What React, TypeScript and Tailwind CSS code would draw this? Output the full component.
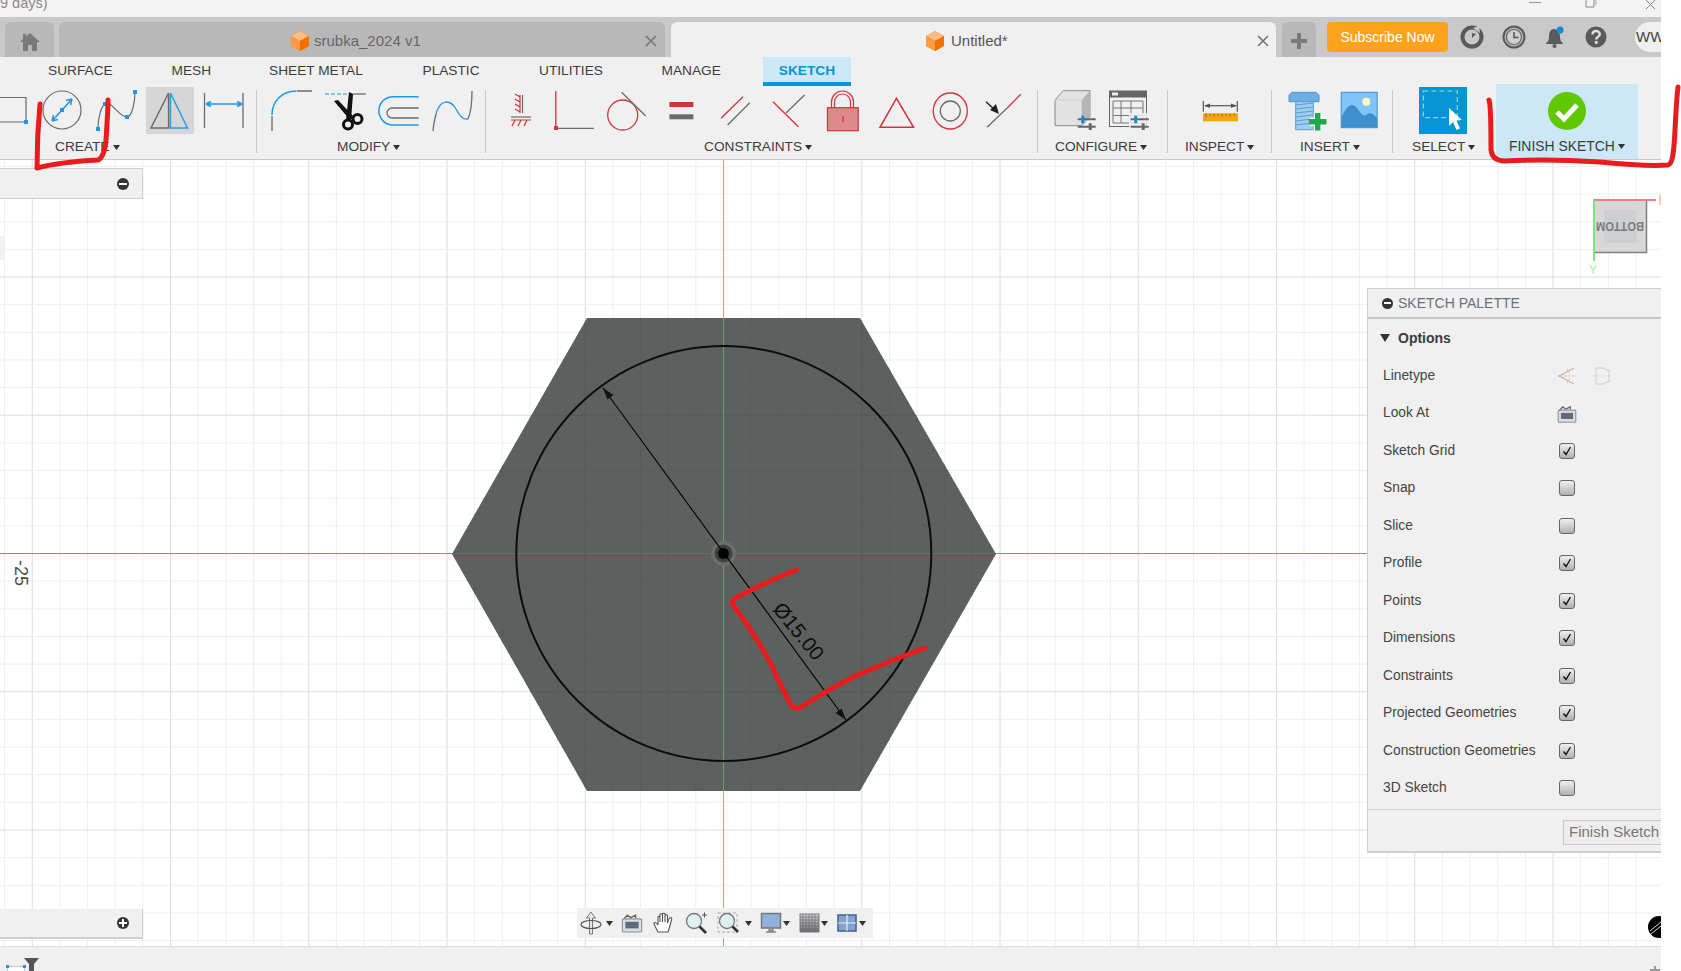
import React from "react";

const G = "#6b6b6b";
const B = "#2196e8";
const R = "#d0343a";

const Ic = ({ w = 54, children }: { w?: number; children: React.ReactNode }) => (
  <svg width={w} height={48} viewBox={`0 0 ${w} 48`} className="block shrink-0" fill="none" overflow="visible">
    {children}
  </svg>
);

const Caret = ({ c = "#333" }: { c?: string }) => (
  <svg width={7} height={5} viewBox="0 0 7 5" className="block shrink-0">
    <path d="M0 0H7L3.5 5Z" fill={c} />
  </svg>
);

const Pt = ({ x, y, s = 4 }: { x: number; y: number; s?: number }) => (
  <rect x={x - s / 2} y={y - s / 2} width={s} height={s} fill={B} />
);

const Sliders = ({ x }: { x: number }) => (
  <g>
    <path d={`M${x} 32.3H${x + 18}M${x} 39.7H${x + 18}`} stroke="#666" strokeWidth={2} />
    <rect x={x + 3.5} y={28.7} width={3} height={7.6} fill="#1689d8" />
    <rect x={x + 11} y={36.3} width={3} height={6.7} fill="#666" />
  </g>
);

function Group({
  w,
  pl,
  labelPl,
  label,
  children,
}: {
  w: string;
  pl: string;
  labelPl: string;
  label: string;
  children: React.ReactNode;
}) {
  return (
    <div className={`${w} shrink-0 flex flex-col pt-px overflow-hidden`}>
      <div className={`flex ${pl}`}>{children}</div>
      <div className={`flex items-center gap-[3px] h-4 leading-4 mt-1 text-[13.7px] text-[#3c3c3c] ${labelPl}`}>
        <span className="whitespace-nowrap">{label}</span>
        <Caret />
      </div>
    </div>
  );
}

const Divider = () => <div className="w-px h-[63px] mt-1 bg-[#c9c9c9] shrink-0" />;

const Cube = () => (
  <svg width={18} height={20} viewBox="0 0 18 20" className="block shrink-0">
    <path d="M9 0L18 5V15L9 20L0 15V5Z" fill="#f97f13" />
    <path d="M9 0L18 5L9 10L0 5Z" fill="#fbbd83" />
    <path d="M0 5L9 10V20L0 15Z" fill="#fd9c3f" />
    <path d="M18 5L9 10V20L18 15Z" fill="#f26f00" />
  </svg>
);

const CloseX = () => (
  <svg width={12} height={12} viewBox="0 0 12 12" className="block shrink-0">
    <path d="M1 1L11 11M11 1L1 11" stroke="#777" strokeWidth={1.7} />
  </svg>
);

const Check = ({ on }: { on: boolean }) => (
  <div className="w-4 h-4 rounded-[3px] border-[1.5px] border-[#666] bg-linear-to-b from-[#f0f0f0] to-[#b0b0b0] flex items-center justify-center -mt-px">
    {on && (
      <svg width={12} height={12} viewBox="0 0 12 12" className="block">
        <path d="M2.5 6.5L5 9.5L9.5 2" stroke="#111" strokeWidth={1.4} fill="none" />
      </svg>
    )}
  </div>
);

const LookIcon = ({ s = 20 }: { s?: number }) => (
  <svg width={s} height={s} viewBox="0 0 20 20" className="block shrink-0">
    <path d="M3 7L6 3.5L9 5.5L13 3.5V6" stroke="#666" strokeWidth={1.2} fill="none" />
    <rect x={2} y={6.5} width={16} height={11} rx={1} fill="#d8dde2" stroke="#8c9298" />
    <rect x={4.5} y={9} width={11} height={5.5} fill="#5d6b78" />
  </svg>
);

const rows: [string, boolean][] = [
  ["Sketch Grid", true],
  ["Snap", false],
  ["Slice", false],
  ["Profile", true],
  ["Points", true],
  ["Dimensions", true],
  ["Constraints", true],
  ["Projected Geometries", true],
  ["Construction Geometries", true],
  ["3D Sketch", false],
];

const X0 = 723.5;
const Y0 = 553.5;
const STEP = 27.65;
const idx = (a: number, b: number) => {
  const r: number[] = [];
  for (let i = a; i <= b; i++) r.push(i);
  return r;
};
const HEX = "452,554 587,318 860,318 996,554 860,791 587,791";

function GridLines({ minor, major }: { minor: string; major: string }) {
  return (
    <g>
      {idx(-27, 35).map((i) => {
        const x = X0 + i * STEP;
        return <line key={`v${i}`} x1={x} x2={x} y1={160} y2={946} stroke={i % 5 === 0 ? major : minor} strokeWidth={1} />;
      })}
      {idx(-15, 15).map((i) => {
        const y = Y0 + i * STEP;
        return <line key={`h${i}`} y1={y} y2={y} x1={0} x2={1661} stroke={i % 5 === 0 ? major : minor} strokeWidth={1} />;
      })}
    </g>
  );
}

function CanvasDrawing() {
  return (
    <svg width={1661} height={786} viewBox="0 160 1661 786" className="absolute left-0 top-0 block">
      <defs>
        <clipPath id="hexc">
          <polygon points={HEX} />
        </clipPath>
      </defs>
      <rect x={0} y={160} width={1661} height={786} fill="#fff" />
      <GridLines minor="#efefef" major="#dcdcdc" />
      <rect x={0} y={236} width={4} height={24} fill="#f2f2f2" />
      <line x1={0} x2={1367} y1={Y0} y2={Y0} stroke="#d66a6a" strokeWidth={1} />
      <line x1={X0} x2={X0} y1={160} y2={946} stroke="#74c974" strokeWidth={1} />
      <polygon points={HEX} fill="#5c615f" />
      <g clipPath="url(#hexc)">
        <GridLines minor="#595e5c" major="#555a58" />
        <line x1={0} x2={1367} y1={Y0} y2={Y0} stroke="#a84f50" strokeWidth={1} />
        <line x1={X0} x2={X0} y1={160} y2={946} stroke="#5fa864" strokeWidth={1} />
      </g>
      <circle cx={X0 + 0.3} cy={Y0} r={207.5} fill="none" stroke="#0c0c0c" strokeWidth={2} />
      <circle cx={X0} cy={Y0} r={12.5} fill="#6a6e6c" />
      <circle cx={X0} cy={Y0} r={9} fill="#3f4241" />
      <circle cx={X0} cy={Y0} r={5.5} fill="#050505" />
      <line x1={603} y1={388} x2={846} y2={720} stroke="#000" strokeWidth={1.1} />
      <path d="M603 388L613.5 395L607.5 399.5Z" fill="#111" />
      <path d="M846 720L835.5 713L841.5 708.5Z" fill="#111" />
      <text
        x={799}
        y={631}
        textAnchor="middle"
        dominantBaseline="central"
        fontSize={20.5}
        fill="#0c0c0c"
        transform="rotate(51 799 631)"
        fontFamily="Liberation Sans"
      >
        Ø15.00
      </text>
      <text
        x={21}
        y={573}
        textAnchor="middle"
        dominantBaseline="central"
        fontSize={18}
        fill="#4a4a4a"
        transform="rotate(90 21 573)"
        fontFamily="Liberation Sans"
      >
        -25
      </text>

      <rect x={1594} y={200} width={52.5} height={52.5} fill="#d8d8d8" stroke="#808080" strokeWidth={1.5} />
      <rect x={1604} y={210} width={32.5} height={33} fill="#cdcfd1" />
      <text
        x={1620}
        y={226}
        textAnchor="middle"
        dominantBaseline="central"
        fontSize={13}
        fontWeight={700}
        fill="#7c7c7c"
        textLength={48}
        lengthAdjust="spacingAndGlyphs"
        transform="rotate(180 1620 226)"
        fontFamily="Liberation Sans"
      >
        BOTTOM
      </text>
      <line x1={1594} x2={1656} y1={200} y2={200} stroke="#f07d82" strokeWidth={2} />
      <line x1={1594} x2={1594} y1={200} y2={261} stroke="#78e878" strokeWidth={2} />
      <text x={1593} y={269} textAnchor="middle" dominantBaseline="central" fontSize={13} fill="#a8eea8" fontFamily="Liberation Sans">
        Y
      </text>
      <path d="M1660 195V205" stroke="#f7b5b5" strokeWidth={1.5} />
    </svg>
  );
}

export default function App() {
  return (
    <div className="relative w-[1681px] h-[971px] bg-white overflow-hidden flex font-['Liberation_Sans',sans-serif]">
      <div className="w-[1661px] h-full flex flex-col overflow-hidden shrink-0">
        {/* window strip */}
        <div className="h-[17px] bg-[#f3f3f3] overflow-hidden relative shrink-0">
          <div className="-mt-[5px] text-[14.5px] leading-4 text-[#8a8a8a]">9 days)</div>
          <div className="absolute left-[1529px] top-[2px] w-3 h-px bg-[#999]" />
          <svg width={14} height={10} viewBox="0 0 14 10" className="absolute left-[1585px] top-0 block">
            <path d="M1 0V7H9V0M4 0V-1" stroke="#888" fill="none" />
            <path d="M11 0V5" stroke="#aaa" fill="none" />
          </svg>
          <svg width={12} height={10} viewBox="0 0 12 10" className="absolute left-[1645px] top-0 block">
            <path d="M1 0L10 9M10 0L1 9" stroke="#888" />
          </svg>
        </div>

        {/* document tab bar */}
        <div className="h-10 bg-[#c9c9c9] pt-[5px] flex items-stretch shrink-0 overflow-hidden">
          <div className="ml-[5px] w-[49px] shrink-0 rounded-t-md bg-[#b8b8b8] flex items-center justify-center pt-[5px]">
            <svg width={20} height={18} viewBox="0 0 20 18" className="block">
              <path d="M10 0L20 9H17V18H12V12H8V18H3V9H0L3 6.3V1H6V3.6Z" fill="#7a7a7a" />
            </svg>
          </div>
          <div className="ml-[5px] w-[606px] shrink-0 rounded-t-md bg-[#b8b8b8] flex items-center pl-[232px] gap-[5px] pt-[3px]">
            <Cube />
            <span className="text-[15px] text-[#666]">srubka_2024 v1</span>
            <span className="ml-auto mr-2">
              <CloseX />
            </span>
          </div>
          <div className="ml-[6px] w-[605px] shrink-0 rounded-t-md bg-[#f0f0f0] flex items-center pl-[255px] gap-[7px] pt-[3px]">
            <Cube />
            <span className="text-[15px] text-[#555]">Untitled*</span>
            <span className="ml-auto mr-[7px]">
              <CloseX />
            </span>
          </div>
          <div className="ml-[6px] w-[34px] shrink-0 rounded-t-md bg-[#b8b8b8] flex items-center justify-center pt-[3px]">
            <svg width={16} height={16} viewBox="0 0 16 16" className="block">
              <path d="M8 0V16M0 8H16" stroke="#7a7a7a" strokeWidth={4} />
            </svg>
          </div>
          <div className="ml-[11px] w-[121px] shrink-0 h-[30px] rounded bg-[#fda31b] text-white text-[14px] flex items-center justify-center">
            Subscribe Now
          </div>
          <div className="ml-3 w-6 shrink-0 h-[30px] flex items-center">
            <svg width={24} height={24} viewBox="0 0 24 24" className="block">
              <circle cx={12} cy={12} r={9.5} fill="none" stroke="#5a5a5a" strokeWidth={4} />
              <path d="M13 3L19 1L20 8Z" fill="#c9c9c9" />
              <path d="M12 8V13L16 9Z" fill="#5a5a5a" />
            </svg>
          </div>
          <div className="ml-[18px] w-6 shrink-0 h-[30px] flex items-center">
            <svg width={24} height={24} viewBox="0 0 24 24" className="block">
              <circle cx={12} cy={12} r={10.5} fill="#b5b5b5" stroke="#5a5a5a" strokeWidth={2} />
              <circle cx={12} cy={12} r={7.5} fill="#d0d0d0" stroke="#666" strokeWidth={1.2} />
              <path d="M12 7V12.5H16.5" stroke="#555" strokeWidth={1.5} fill="none" />
            </svg>
          </div>
          <div className="ml-[17px] w-6 shrink-0 h-[30px] flex items-center">
            <svg width={24} height={24} viewBox="0 0 24 24" className="block">
              <path d="M11 4C7 4 6 8 6 12C6 15 5 17 3 18V19H20V18C18 17 17 15 17 12C17 8 15 4 11 4Z" fill="#5a5a5a" />
              <circle cx={11.5} cy={21} r={2} fill="#5a5a5a" />
              <circle cx={17} cy={5} r={3.5} fill="#0f8ad8" />
            </svg>
          </div>
          <div className="ml-[17px] w-6 shrink-0 h-[30px] flex items-center">
            <svg width={24} height={24} viewBox="0 0 24 24" className="block">
              <circle cx={12} cy={12} r={10.5} fill="#5a5a5a" />
              <path d="M8.5 9.5C8.5 7 10 6 12 6C14 6 15.8 7.2 15.8 9.2C15.8 11.8 12.2 11.8 12.2 14.5" stroke="#e0e0e0" strokeWidth={2.4} fill="none" />
              <rect x={10.8} y={16} width={2.8} height={2.8} fill="#e0e0e0" />
            </svg>
          </div>
          <div className="ml-[27px] w-[40px] shrink-0 h-[30px] rounded-full bg-[#f0f0f0] flex items-center text-[15px] text-[#444] whitespace-nowrap pl-px">
            WW
          </div>
        </div>

        {/* toolbar */}
        <div className="h-[103px] bg-[#f0f0f0] border-b border-[#c8c8c8] shrink-0 flex flex-col">
          <div className="h-[29px] pl-[48px] flex items-center text-[13.7px] text-[#3c3c3c] shrink-0">
            <span className="w-[123.5px] shrink-0">SURFACE</span>
            <span className="w-[97.5px] shrink-0">MESH</span>
            <span className="w-[153.5px] shrink-0">SHEET METAL</span>
            <span className="w-[116.5px] shrink-0">PLASTIC</span>
            <span className="w-[122.5px] shrink-0">UTILITIES</span>
            <span className="w-[101.5px] shrink-0">MANAGE</span>
            <div className="w-[88px] h-[29px] shrink-0 bg-[#cce8f6] border-b-4 border-[#0696d7] flex items-center justify-center font-bold text-[#0696d7] pt-[3px]">
              SKETCH
            </div>
          </div>
          <div className="flex h-[73px]">
            <Group w="w-[256px]" pl="pl-0" labelPl="pl-[55px]" label="CREATE">
              <Ic w={35}>
                <path d="M0 10.5H26V35H0" stroke={G} strokeWidth={1.2} />
                <Pt x={26} y={35} />
              </Ic>
              <Ic>
                <circle cx={27} cy={23} r={19} stroke={G} strokeWidth={1.2} />
                <path d="M17 34L37 12M37 12L31 13.5M37 12L35.5 18M17 34L23 32.5M17 34L18.5 28" stroke={B} strokeWidth={1.5} />
                <Pt x={27} y={23} />
              </Ic>
              <Ic>
                <path d="M9 42C9 30 12 20 16 17C22 13 30 30 38 30C43 30 46 15 46 5" stroke={G} strokeWidth={1.2} />
                <Pt x={9} y={42} />
                <Pt x={16} y={17} />
                <Pt x={38} y={30} />
                <Pt x={46} y={5} />
              </Ic>
              <Ic>
                <rect x={3} y={0} width={48} height={47} fill="#d6d6d6" />
                <path d="M25.6 6L8 41H25.6Z" stroke={G} strokeWidth={1.5} />
                <path d="M27.4 6L44.5 41H27.4Z" stroke="#2f9be0" strokeWidth={1.5} />
              </Ic>
              <Ic>
                <path d="M7.5 6V41M46 6V41" stroke={G} strokeWidth={1.3} />
                <path d="M9 17H45M9 17L14 14.5M9 17L14 19.5M45 17L40 14.5M45 17L40 19.5" stroke={B} strokeWidth={1.5} />
              </Ic>
            </Group>
            <Divider />
            <Group w="w-[228px]" pl="pl-2" labelPl="pl-[80px]" label="MODIFY">
              <Ic w={53}>
                <path d="M7 28C7 14 17 4 31.4 4" stroke={B} strokeWidth={1.5} />
                <path d="M32 4H47M7 29V44" stroke={G} strokeWidth={1.3} />
              </Ic>
              <Ic>
                <path d="M7 7H30" stroke={B} strokeWidth={1.2} strokeDasharray="4 2" />
                <path d="M35 7H48" stroke={G} strokeWidth={1.3} />
                <path d="M16 14L20 13L36 30L32 33Z" fill="#111" />
                <path d="M31 5L35 7L33 33H28Z" fill="#111" />
                <circle cx={30} cy={37.5} r={4.5} stroke="#111" strokeWidth={3} />
                <circle cx={39.5} cy={32} r={4.5} stroke="#111" strokeWidth={3} />
              </Ic>
              <Ic>
                <path d="M46.6 9.7H21A14.1 14.1 0 0 0 21 38H46.6" stroke={B} strokeWidth={1.5} />
                <path d="M46.6 21H20A5 5 0 0 0 20 31H46.6" stroke={G} strokeWidth={1.3} />
              </Ic>
              <Ic>
                <path d="M7 44C7.5 36 9 32 10 27" stroke={G} strokeWidth={1.3} />
                <path d="M10 27C14 12 24 12 30 22C34 30 38 33 42 32" stroke={B} strokeWidth={1.3} />
                <path d="M42 32C45 25 46 15 46 4" stroke={G} strokeWidth={1.3} />
              </Ic>
            </Group>
            <Divider />
            <Group w="w-[551px]" pl="pl-[7.5px]" labelPl="pl-[218px]" label="CONSTRAINTS">
              <Ic w={53.5}>
                <path d="M28.5 8V26" stroke={G} strokeWidth={1.2} />
                <path d="M26 8V26M26 10L21 7M26 15L21 12M26 20L21 17M26 25L21 22" stroke={R} strokeWidth={1.2} />
                <path d="M17 30H37" stroke={G} strokeWidth={1.2} />
                <path d="M17 33H37M21 33L18 39M27 33L24 39M33 33L30 39" stroke={R} strokeWidth={1.2} />
              </Ic>
              <Ic w={53}>
                <path d="M8.8 4V40" stroke={R} strokeWidth={1.3} />
                <rect x={7} y={39} width={4} height={4} fill={R} />
                <path d="M11 41.3H47" stroke={G} strokeWidth={1.3} />
              </Ic>
              <Ic w={55}>
                <circle cx={22.7} cy={28} r={15} stroke={R} strokeWidth={1.3} />
                <path d="M21.6 5.3L45.7 29" stroke={G} strokeWidth={1.3} />
              </Ic>
              <Ic w={53}>
                <rect x={14.4} y={15} width={24} height={5} fill={R} />
                <rect x={14.4} y={27.3} width={24} height={5} fill={G} />
              </Ic>
              <Ic>
                <path d="M13 31.3L35 9.7" stroke={R} strokeWidth={1.3} />
                <path d="M19.6 38L41.8 15.7" stroke={G} strokeWidth={1.3} />
              </Ic>
              <Ic w={53.5}>
                <path d="M11 14.7L36.4 39.7" stroke={R} strokeWidth={1.3} />
                <path d="M24 26L42.5 8" stroke={G} strokeWidth={1.3} />
              </Ic>
              <Ic w={53.5}>
                <path d="M15.5 21V15A11 11 0 0 1 37.5 15V21" stroke={R} strokeWidth={1.2} />
                <path d="M18.5 21V15A8 8 0 0 1 34.5 15V21" stroke={R} strokeWidth={1.2} />
                <rect x={11.5} y={20.7} width={30.7} height={23} fill="#de8a8a" stroke={R} strokeWidth={1.2} />
                <path d="M27 29V35" stroke={R} strokeWidth={1.3} />
              </Ic>
              <Ic>
                <path d="M27.4 11.3L11 40.3H44.6Z" stroke={R} strokeWidth={1.5} />
              </Ic>
              <Ic>
                <ellipse cx={27.3} cy={24} rx={17} ry={18} stroke={R} strokeWidth={1.3} />
                <circle cx={27.3} cy={24} r={10} stroke={G} strokeWidth={1.3} />
              </Ic>
              <Ic>
                <path d="M10 40.3L31 20.3" stroke={G} strokeWidth={1.3} />
                <path d="M31 20.3L43.8 7.3" stroke={R} strokeWidth={1.3} />
                <path d="M9 14.7L18 23" stroke="#222" strokeWidth={1.5} />
                <path d="M22 27L19 17L13 23Z" fill="#222" />
              </Ic>
            </Group>
            <Divider />
            <Group w="w-[129px]" pl="pl-[10px]" labelPl="pl-[17px]" label="CONFIGURE">
              <Ic>
                <path d="M7 13L15.3 3.7H42V29.7L33.7 38.7H7Z" fill="#e2e2e2" stroke="#8a8a8a" strokeWidth={1} />
                <path d="M33.7 13L42 3.7V29.7L33.7 38.7Z" fill="#b6b6b6" />
                <path d="M7 13H33.7" stroke="#cfcfcf" />
                <Sliders x={29.7} />
              </Ic>
              <Ic>
                <rect x={7.5} y={4} width={37} height={35.5} fill="#f0f0f0" stroke="#666" />
                <rect x={7.5} y={4} width={37} height={6.5} fill="#666" />
                <rect x={10} y={5.5} width={6} height={3} fill="#eee" />
                <path d="M11 14H41V36H11ZM11 21H41M11 28.5H41M19 14V36M29 14V36" stroke="#777" strokeWidth={1} />
                <rect x={27} y={26} width={22} height={18} fill="#f0f0f0" opacity={0.85} />
                <Sliders x={28.7} />
              </Ic>
            </Group>
            <Divider />
            <Group w="w-[103px]" pl="pl-[25px]" labelPl="pl-[17px]" label="INSPECT">
              <Ic>
                <path d="M10.3 14V24.7M44.3 14V24.7" stroke="#555" strokeWidth={1.2} />
                <path d="M12 18.7H43" stroke="#555" strokeWidth={1.2} />
                <path d="M11 18.7L17 16.5V21ZM44 18.7L38 16.5V21Z" fill="#555" />
                <rect x={10} y={26.3} width={35} height={8} fill="#f3a50f" />
                <path d="M13 26.3V30M17 26.3V29M21 26.3V30M25 26.3V29M29 26.3V30M33 26.3V29M37 26.3V30M41 26.3V29" stroke="#8a5f10" strokeWidth={0.8} />
              </Ic>
            </Group>
            <Divider />
            <Group w="w-[120px]" pl="pl-[9px]" labelPl="pl-7" label="INSERT">
              <Ic w={52}>
                <path d="M8 8L11 5.3H35L38 8V14.7H8Z" fill="#6eafe2" stroke="#4d96d2" />
                <rect x={14.7} y={14.7} width={17.6} height={28} fill="#a3cbea" stroke="#5b9fd6" />
                <path d="M14.7 18L32.3 16M14.7 22L32.3 20M14.7 26L32.3 24M14.7 30L32.3 28M14.7 34L32.3 32M14.7 38L32.3 36" stroke="#5b9fd6" strokeWidth={1.2} />
                <path d="M36.7 27V42.5M28.7 34.7H44.7" stroke="#fff" strokeWidth={8} />
                <path d="M36.7 26V43.5M27.9 34.7H45.5" stroke="#21a84a" strokeWidth={5.5} />
              </Ic>
              <Ic w={52}>
                <rect x={8.2} y={5.3} width={36} height={35.4} fill="#80c4f8" stroke="#3d8fd0" />
                <path d="M8.7 30C14 18 19 15 24 21C28 26 30 30 33 28C36 25 40 26 44 31V40.2H8.7Z" fill="#3f8fcf" />
                <circle cx={33.3} cy={14.7} r={4} fill="#fff7c4" />
              </Ic>
            </Group>
            <Divider />
            <Group w="w-[103px]" pl="pl-[23px]" labelPl="pl-[19px]" label="SELECT">
              <Ic>
                <rect x={3} y={0} width={48} height={47} fill="#0696d7" />
                <rect x={7.3} y={4} width={34} height={26.7} stroke="#8be78f" strokeWidth={1.2} strokeDasharray="5 3" />
                <path d="M33 21V39L37 35L40.5 43L44 41.5L40.5 33.5L46 33Z" fill="#fff" />
              </Ic>
            </Group>
            <div className="w-[142px] h-[75px] -mt-[2px] bg-[#cce8f6] flex flex-col shrink-0">
              <svg width={142} height={48} viewBox="0 0 142 48" className="block mt-[7px] shrink-0">
                <circle cx={71} cy={20} r={19} fill="#5fc800" />
                <path d="M61 21L68 28L81 14" stroke="#fff" strokeWidth={5} fill="none" />
              </svg>
              <div className="flex items-center gap-[3px] h-4 leading-4 -mt-px pl-[13px] text-[13.9px] text-[#3c3c3c]">
                <span className="whitespace-nowrap">FINISH SKETCH</span>
                <Caret />
              </div>
            </div>
          </div>
        </div>

        {/* canvas */}
        <div className="relative flex-1 overflow-hidden bg-white">
          <CanvasDrawing />

          <div className="absolute left-0 top-2 w-[143px] h-[31px] bg-[#f0f0f0] border-r border-b border-t border-[#cfcfcf] flex items-center justify-end pr-[13px]">
            <div className="w-3 h-3 rounded-full bg-[#333] flex items-center justify-center">
              <div className="w-2 h-[2px] bg-white" />
            </div>
          </div>

          <div className="absolute left-0 top-[749px] w-[143px] h-[30px] bg-[#f0f0f0] border-r border-b-2 border-[#cfcfcf] flex items-center justify-end pr-[13px]">
            <div className="w-3 h-3 rounded-full bg-[#333] flex items-center justify-center relative">
              <div className="w-2 h-[2px] bg-white" />
              <div className="absolute left-[5px] top-[2px] w-[2px] h-2 bg-white" />
            </div>
          </div>

          {/* navigation bar */}
          <div className="absolute left-[577px] top-[748px] w-[296px] h-[30px] bg-[#f0f0f0] flex items-center">
            <svg width={24} height={24} viewBox="0 0 24 24" className="block shrink-0 ml-[2px]">
              <path d="M12 1L7.5 7H10.5V23H13.5V7H16.5Z" fill="#e8e8e8" stroke="#777" />
              <ellipse cx={12} cy={13.5} rx={10} ry={4} fill="none" stroke="#555" strokeWidth={1.2} />
            </svg>
            <span className="ml-[3px]">
              <Caret />
            </span>
            <span className="ml-[7px]">
              <LookIcon s={24} />
            </span>
            <svg width={24} height={24} viewBox="0 0 24 24" className="block shrink-0 ml-2">
              <path d="M6 21C4 17 2 14 2 12C3 11 5 12 6 14V6C6 5 8 5 8 6V11V3.5C8 2.5 10.5 2.5 10.5 3.5V11V3C10.5 2 13 2 13 3V11V4.5C13 3.5 15.5 3.5 15.5 4.5V12C16 10 17.5 6.5 19 6.5C20 7 20 8 19.5 9L17 18L16 21Z" fill="#fff" stroke="#555" strokeWidth={1.1} />
            </svg>
            <svg width={24} height={24} viewBox="0 0 24 24" className="block shrink-0 ml-2">
              <circle cx={10} cy={10} r={7.5} fill="#dff0f2" stroke="#777" strokeWidth={1.3} />
              <path d="M15.5 15.5L22 22" stroke="#333" strokeWidth={2.6} />
              <path d="M18 4H23M20.5 1.5V6.5" stroke="#555" />
            </svg>
            <svg width={24} height={24} viewBox="0 0 24 24" className="block shrink-0 ml-[9px]">
              <rect x={1} y={2} width={19} height={19} fill="none" stroke="#aaa" strokeDasharray="3 2" />
              <circle cx={10} cy={10} r={7.5} fill="#dff0f2" stroke="#777" strokeWidth={1.3} />
              <path d="M15.5 15.5L21 21" stroke="#333" strokeWidth={2.6} />
            </svg>
            <span className="ml-1">
              <Caret />
            </span>
            <svg width={24} height={24} viewBox="0 0 24 24" className="block shrink-0 ml-[7px]">
              <rect x={2.5} y={2.5} width={19} height={14.5} fill="#8fb0da" stroke="#777" strokeWidth={1.5} />
              <path d="M10 17H14V20H10ZM7 21H17" stroke="#888" strokeWidth={1.5} fill="#aaa" />
            </svg>
            <Caret />
            <svg width={24} height={24} viewBox="0 0 24 24" className="block shrink-0 ml-2">
              <defs>
                <linearGradient id="gr" x1="0" y1="0" x2="0" y2="1">
                  <stop offset="0" stopColor="#d4d4d4" />
                  <stop offset="1" stopColor="#74747c" />
                </linearGradient>
              </defs>
              <rect x={2} y={3} width={19} height={18} fill="url(#gr)" stroke="#666" strokeWidth={0.8} />
              <path d="M5 3V21M8 3V21M11 3V21M14 3V21M17 3V21M2 6H21M2 9H21M2 12H21M2 15H21M2 18H21" stroke="#555" strokeWidth={0.5} />
            </svg>
            <span className="-ml-px">
              <Caret />
            </span>
            <svg width={24} height={24} viewBox="0 0 24 24" className="block shrink-0 ml-[7px]">
              <rect x={3} y={4} width={18} height={16} fill="#84a4d0" stroke="#3f5f8f" strokeWidth={1.5} />
              <path d="M12 4V20M3 12H21" stroke="#e8eef6" strokeWidth={1.2} />
            </svg>
            <Caret />
          </div>

          {/* sketch palette */}
          <div className="absolute left-[1367px] right-0 top-[128px] h-[565px] bg-[#f0f0f0] border-l border-b-2 border-t border-[#cfcfcf] flex flex-col">
            <div className="h-[30px] border-b-2 border-[#c6c6c6] flex items-center pl-[14px] gap-[5px] text-[14px] text-[#667080] shrink-0">
              <div className="w-[11px] h-[11px] rounded-full bg-[#333] flex items-center justify-center">
                <div className="w-[7px] h-[2px] bg-white" />
              </div>
              <span>SKETCH PALETTE</span>
            </div>
            <div className="h-[38px] flex items-center pl-3 gap-2 shrink-0 font-bold text-[14px] text-[#3c3c3c]">
              <svg width={10} height={8} viewBox="0 0 10 8" className="block">
                <path d="M0 0H10L5 8Z" fill="#333" />
              </svg>
              Options
            </div>
            <div className="h-[37.5px] flex items-center pl-[15px] pt-px text-[13.8px] text-[#444]">
              <span className="w-[174px]">Linetype</span>
              <svg width={20} height={20} viewBox="0 0 20 20" className="block -mt-px">
                <path d="M17 2L2 10L17 18" stroke="#aaa" fill="none" />
                <path d="M1 10H19M10 3L13 8M13 12L10 17" stroke="#f4b183" strokeDasharray="2 1.5" fill="none" />
              </svg>
              <svg width={20} height={20} viewBox="0 0 20 20" className="block ml-[15px] -mt-px">
                <path d="M4 2H12L14 4H17V16H14L12 18H4Z" stroke="#ccc" fill="none" />
                <path d="M1 10H19" stroke="#f7cfb0" strokeDasharray="2 1.5" />
              </svg>
            </div>
            <div className="h-[37.5px] flex items-center pl-[15px] pt-px text-[13.8px] text-[#444]">
              <span className="w-[173px]">Look At</span>
              <LookIcon s={22} />
            </div>
            {rows.map(([label, on]) => (
              <div key={label} className="h-[37.5px] flex items-center pl-[15px] pt-px text-[13.8px] text-[#444] shrink-0">
                <span className="w-[176px] whitespace-nowrap">{label}</span>
                <Check on={on} />
              </div>
            ))}
            <div className="mt-[2px] flex-1 border-t border-[#cfcfcf] pl-[195px] pt-[10px]">
              <div className="w-[110px] h-[25px] bg-[#ededed] border border-[#c8c8c8] text-[15px] text-[#777] flex items-center pl-[5px] whitespace-nowrap">
                Finish Sketch
              </div>
            </div>
          </div>

          <div className="absolute left-[1648px] top-[756px] w-[22px] h-[22px] rounded-full bg-black flex items-center justify-center">
            <svg width={22} height={22} viewBox="0 0 22 22" className="block">
              <path d="M2 15L13 6M3 18L13 10" stroke="#ddd" strokeWidth={1} />
            </svg>
          </div>
        </div>

        {/* status bar */}
        <div className="h-[25px] bg-[#f0f0f0] border-t border-[#dcdcdc] shrink-0 relative overflow-hidden">
          <svg width={40} height={25} viewBox="0 0 40 25" className="absolute left-0 top-0 block">
            <rect x={7.5} y={19.5} width={17} height={8} fill="#fff" stroke="#c8c8c8" />
            <rect x={6} y={18} width={3} height={3} fill={B} />
            <rect x={23} y={18} width={3} height={3} fill={B} />
            <path d="M24 11H39L34 17V25H29V17Z" fill="#555" />
          </svg>
          <svg width={12} height={6} viewBox="0 0 12 6" className="absolute left-[1649px] top-[19px] block">
            <path d="M6 0V6M1 4H11" stroke="#999" strokeWidth={2} />
          </svg>
        </div>
      </div>
      <div className="flex-1 bg-white" />

      {/* hand-drawn red annotations */}
      <svg width={1681} height={971} viewBox="0 0 1681 971" className="absolute left-0 top-0 block pointer-events-none" fill="none">
        <g stroke="#e81c1c" strokeWidth={5} strokeLinecap="round" strokeLinejoin="round">
          <path d="M40 104C38 125 37 150 37 168C55 163 80 161 98 160C103 158 105 150 106 140C107 125 108 110 108 100" />
          <path d="M1489 100C1491 105 1491 130 1491 150C1492 158 1497 161 1505 161C1540 159 1570 160 1600 162C1630 165 1655 166 1668 165C1673 164 1674 150 1675 130C1676 110 1677 95 1678 87" />
          <path d="M796 570C775 578 755 588 739 596C733 599 731 602 733 605C748 625 765 650 777 677C782 688 787 698 791 705C794 709 797 709 801 707C820 695 840 683 860 674C880 665 905 655 925 648" />
        </g>
      </svg>
    </div>
  );
}
